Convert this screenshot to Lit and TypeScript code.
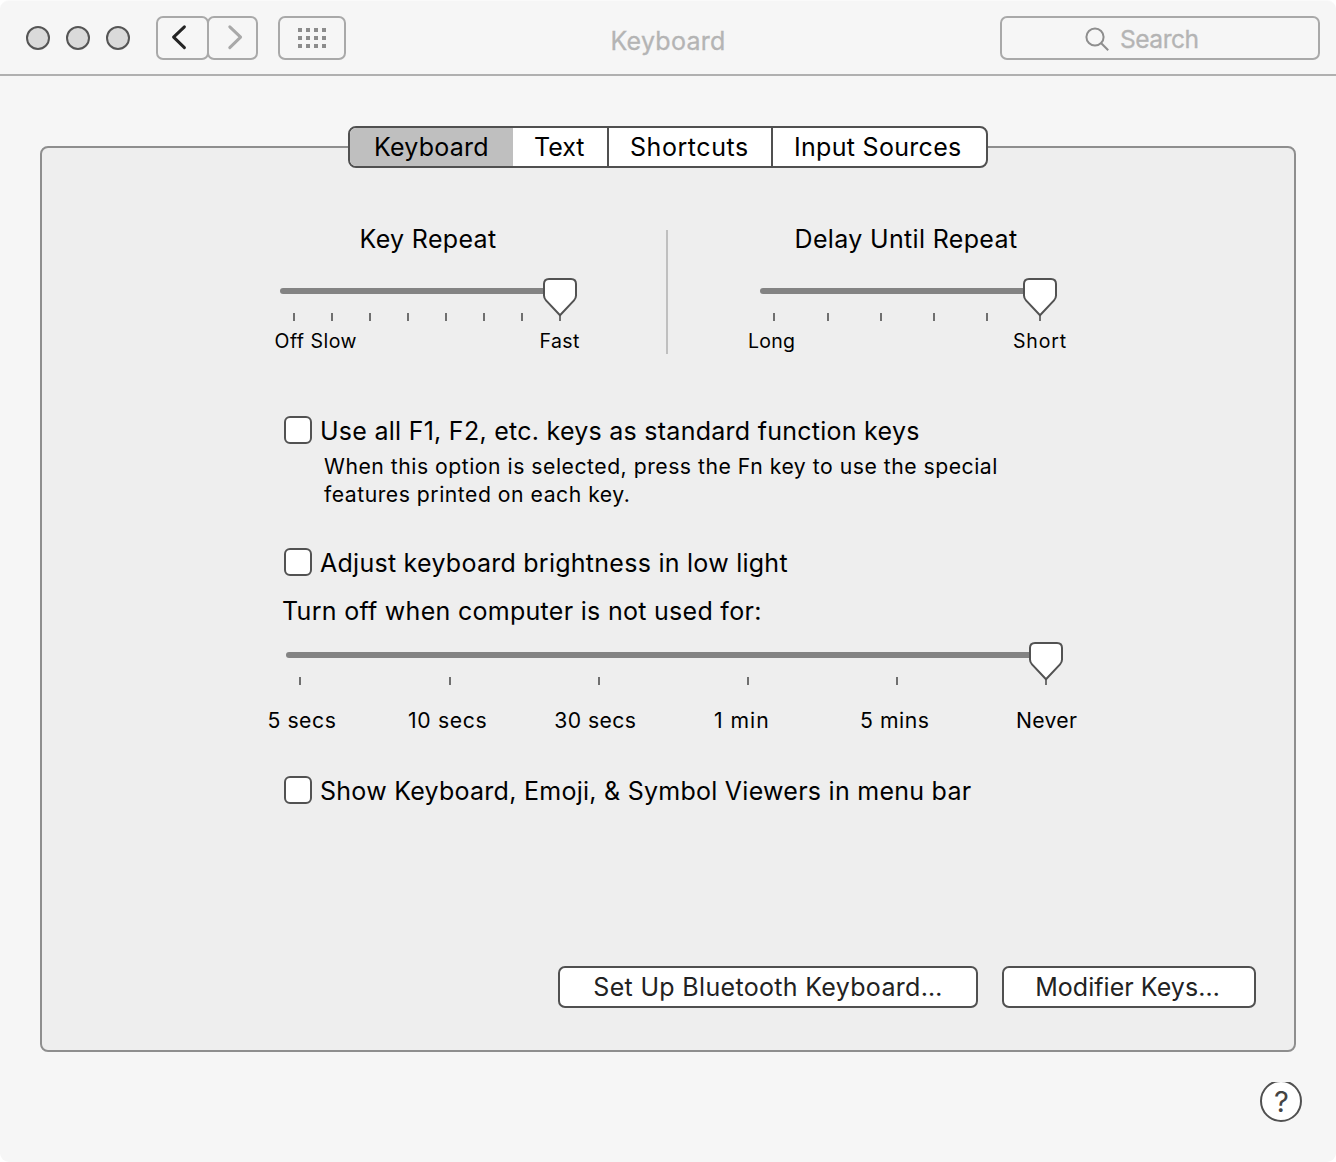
import { LitElement, html, svg, css } from "lit";
import { customElement, property } from "lit/decorators.js";

interface SliderLabel {
  text: string;
  x: number;
  width: number;
}

/** A tick-marked slider with its pointed knob resting on the last tick. */
@customElement("tick-slider")
class TickSlider extends LitElement {
  @property({ attribute: false }) ticks: number[] = [];
  @property({ attribute: false }) labels: SliderLabel[] = [];
  @property({ type: Number }) labelSize = 19.5;
  @property({ type: Number }) baseline = 70;
  @property({ type: Number }) width = 296;

  static styles = css`
    :host {
      display: block;
    }
    .slider {
      display: block;
      overflow: visible;
      font-family: Inter, "Liberation Sans", sans-serif;
    }
    .track {
      fill: #838383;
    }
    .tick {
      fill: #6f6f6f;
    }
    .knob {
      fill: #fff;
      stroke: #525252;
      stroke-width: 2;
      stroke-linejoin: round;
    }
    .label {
      fill: #000;
    }
  `;

  render() {
    const end = this.ticks[this.ticks.length - 1];
    return html`<svg class="slider" width=${this.width} height=${this.baseline + 6}>
      <rect class="track" x="0" y="10" width=${end} height="6" rx="3"></rect>
      ${this.ticks.map(
        (x) => svg`<rect class="tick" x=${x - 1} y="35" width="2" height="8"></rect>`
      )}
      <path
        class="knob"
        transform="translate(${end - 17} 0)"
        d="M6 1H28Q33 1 33 6V17.5Q33 20.3 31 22.4L17 37.3L3 22.4Q1 20.3 1 17.5V6Q1 1 6 1Z"
      ></path>
      ${this.labels.map(
        (l) => svg`<text class="label" x=${l.x} y=${this.baseline}
          font-size=${this.labelSize} textLength=${l.width}>${l.text}</text>`
      )}
    </svg>`;
  }
}

@customElement("check-row")
class CheckRow extends LitElement {
  static styles = css`
    :host {
      display: flex;
      gap: 8px;
      height: 30px;
      line-height: 30px;
      white-space: nowrap;
    }
    .box {
      box-sizing: border-box;
      width: 28px;
      height: 28px;
      flex: none;
      border: 2px solid #525252;
      border-radius: 6px;
      background: #fff;
    }
  `;

  render() {
    return html`<span class="box"></span><span><slot></slot></span>`;
  }
}

@customElement("app-root")
class AppRoot extends LitElement {
  static styles = css`
    :host {
      display: block;
      background: #fff;
      font-family: Inter, "Liberation Sans", sans-serif;
      font-size: 25px;
      color: #000;
    }
    .window {
      box-sizing: border-box;
      width: 1336px;
      height: 1162px;
      display: flex;
      flex-direction: column;
      background: #f6f6f6;
      border-top: 1px solid #fafafa;
      border-radius: 9px;
      overflow: hidden;
    }
    .toolbar {
      box-sizing: border-box;
      height: 75px;
      flex: none;
      display: grid;
      grid-template-columns: 1fr auto 1fr;
      align-items: start;
      padding: 15px 16px 0 26px;
      border-bottom: 2px solid #b0b0b0;
    }
    .left {
      display: flex;
    }
    .lights {
      display: flex;
      gap: 16px;
      padding-top: 10px;
      margin-right: 26px;
    }
    .light {
      box-sizing: border-box;
      width: 24px;
      height: 24px;
      border: 2px solid #555;
      border-radius: 50%;
      background: #dadada;
    }
    .tool {
      box-sizing: border-box;
      height: 44px;
      border: 2px solid #a9a9a9;
      border-radius: 7px;
    }
    .tool svg,
    .search svg,
    .help {
      display: block;
    }
    .back {
      width: 53px;
    }
    .forward {
      width: 51px;
      margin-left: -2px;
    }
    .grid {
      width: 68px;
      margin-left: 20px;
    }
    .chevron {
      fill: none;
      stroke: #242424;
      stroke-width: 3;
      stroke-linecap: round;
      stroke-linejoin: round;
    }
    .chevron.dim {
      stroke: #a9a9a9;
    }
    .dots {
      fill: #8c8c8c;
    }
    .title {
      margin: 10px 10px 0 0;
      line-height: 30px;
      letter-spacing: 0.25px;
      color: #b4b4b4;
      -webkit-text-stroke: 0.3px #b4b4b4;
    }
    .search {
      box-sizing: border-box;
      justify-self: end;
      display: flex;
      gap: 8px;
      width: 320px;
      height: 44px;
      padding-left: 82px;
      border: 2px solid #a9a9a9;
      border-radius: 7px;
      color: #b4b4b4;
      -webkit-text-stroke: 0.3px #b4b4b4;
      font-size: 24.6px;
      line-height: 43px;
      letter-spacing: -0.5px;
    }
    .glass {
      fill: none;
      stroke: #8e8e8e;
      stroke-width: 2;
    }
    .tabs {
      position: relative;
      z-index: 1;
      flex: none;
      align-self: center;
      box-sizing: border-box;
      display: flex;
      width: 640px;
      height: 42px;
      margin: 50px 0 -22px;
      border: 2px solid #505050;
      border-radius: 8px;
      background: #fff;
      overflow: hidden;
      line-height: 38px;
      white-space: nowrap;
    }
    .tab {
      box-sizing: border-box;
    }
    .t-keyboard {
      width: 163px;
      padding-left: 24px;
      background: #bfbfbf;
      letter-spacing: 0.22px;
    }
    .t-text {
      width: 94px;
      padding-left: 21px;
      letter-spacing: 0px;
    }
    .t-shortcuts {
      width: 164px;
      padding-left: 21px;
      border-left: 2px solid #505050;
      letter-spacing: 0.56px;
    }
    .t-sources {
      flex: 1;
      padding-left: 21px;
      border-left: 2px solid #505050;
      letter-spacing: 0.3px;
    }
    .panel {
      box-sizing: border-box;
      flex: none;
      display: flex;
      flex-direction: column;
      height: 906px;
      margin: 0 40px;
      padding: 76px 38px 42px 238px;
      border: 2px solid #8e8e8e;
      border-radius: 8px;
      background: #eee;
    }
    .repeat {
      display: flex;
      height: 130px;
    }
    .group {
      width: 296px;
    }
    .heading {
      margin-bottom: 24px;
      line-height: 30px;
      text-align: center;
      letter-spacing: 0.34px;
    }
    .delay {
      padding-right: 4px;
    }
    .divider {
      width: 2px;
      height: 124px;
      margin: 6px 92px 0 90px;
      background: #bfbfbf;
    }
    .options {
      margin: 62px 0 0 4px;
      letter-spacing: 0.26px;
    }
    .note {
      margin: 6px 0 40px 40px;
      font-size: 21.2px;
      line-height: 28px;
      letter-spacing: 0.51px;
    }
    .idle {
      margin: 18px 0 16px -2px;
      line-height: 30px;
      letter-spacing: 0.29px;
    }
    .idle-slider {
      margin: 0 0 42px 2px;
    }
    .buttons {
      display: flex;
      justify-content: flex-end;
      gap: 24px;
      margin-top: auto;
    }
    .button {
      box-sizing: border-box;
      height: 42px;
      border: 2px solid #505050;
      border-radius: 7px;
      background: #fff;
      color: #222;
      line-height: 38px;
      text-align: center;
    }
    .bluetooth {
      width: 420px;
      letter-spacing: 0.32px;
    }
    .modifier {
      width: 254px;
      padding-right: 3px;
      letter-spacing: 0.05px;
    }
    .help {
      align-self: flex-end;
      margin: 30px 34px 0 0;
      font-size: 29px;
      text-anchor: middle;
    }
    .help-ring {
      fill: #fff;
      stroke: #505050;
      stroke-width: 2;
    }
    .help-mark {
      fill: #444;
    }
  `;

  private repeatTicks = [14, 52, 90, 128, 166, 204, 242, 280];
  private repeatLabels: SliderLabel[] = [
    { text: "Off Slow", x: -5.5, width: 82 },
    { text: "Fast", x: 259.4, width: 40 },
  ];
  private delayTicks = [14, 68, 121, 174, 227, 280];
  private delayLabels: SliderLabel[] = [
    { text: "Long", x: -12, width: 47 },
    { text: "Short", x: 252.9, width: 53.2 },
  ];
  private idleTicks = [14, 164, 313, 462, 611, 760];
  private idleLabels: SliderLabel[] = [
    { text: "5 secs", x: -18.5, width: 68.6 },
    { text: "10 secs", x: 122, width: 79 },
    { text: "30 secs", x: 268.3, width: 82 },
    { text: "1 min", x: 428, width: 55 },
    { text: "5 mins", x: 574, width: 69.3 },
    { text: "Never", x: 730, width: 61.2 },
  ];

  render() {
    return html`
      <div class="window">
        <header class="toolbar">
          <div class="left">
            <div class="lights">
              <span class="light"></span><span class="light"></span><span class="light"></span>
            </div>
            <div class="tool back">
              <svg width="49" height="40">
                <path class="chevron" d="M26.4 8.8L15.6 19.2L26.4 29.6"></path>
              </svg>
            </div>
            <div class="tool forward">
              <svg width="47" height="40">
                <path class="chevron dim" d="M20.8 8.8L31.6 19.2L20.8 29.6"></path>
              </svg>
            </div>
            <div class="tool grid">
              <svg class="dots" width="64" height="40">
                ${[10, 18, 26].map((y) =>
                  [18, 26, 34, 42].map(
                    (x) => svg`<rect x=${x} y=${y} width="4" height="4"></rect>`
                  )
                )}
              </svg>
            </div>
          </div>
          <div class="title">Keyboard</div>
          <div class="search">
            <svg width="28" height="40">
              <circle class="glass" cx="11" cy="19" r="8.6"></circle>
              <path class="glass" d="M17 25L24.2 32.2"></path>
            </svg>
            <span>Search</span>
          </div>
        </header>

        <nav class="tabs">
          <div class="tab t-keyboard">Keyboard</div>
          <div class="tab t-text">Text</div>
          <div class="tab t-shortcuts">Shortcuts</div>
          <div class="tab t-sources">Input Sources</div>
        </nav>

        <main class="panel">
          <section class="repeat">
            <div class="group">
              <div class="heading">Key Repeat</div>
              <tick-slider .ticks=${this.repeatTicks} .labels=${this.repeatLabels}></tick-slider>
            </div>
            <div class="divider"></div>
            <div class="group">
              <div class="heading delay">Delay Until Repeat</div>
              <tick-slider .ticks=${this.delayTicks} .labels=${this.delayLabels}></tick-slider>
            </div>
          </section>

          <section class="options">
            <check-row>Use all F1, F2, etc. keys as standard function keys</check-row>
            <div class="note">
              When this option is selected, press the Fn key to use the special<br />features
              printed on each key.
            </div>
            <check-row>Adjust keyboard brightness in low light</check-row>
            <div class="idle">Turn off when computer is not used for:</div>
            <tick-slider
              class="idle-slider"
              .width=${778}
              .labelSize=${21.2}
              .baseline=${86}
              .ticks=${this.idleTicks}
              .labels=${this.idleLabels}
            ></tick-slider>
            <check-row>Show Keyboard, Emoji, &amp; Symbol Viewers in menu bar</check-row>
          </section>

          <div class="buttons">
            <div class="button bluetooth">Set Up Bluetooth Keyboard…</div>
            <div class="button modifier">Modifier Keys…</div>
          </div>
        </main>

        <svg class="help" width="42" height="42">
          <clipPath id="help-clip"><rect x="0" y="0" width="42" height="42"></rect></clipPath>
          <g clip-path="url(#help-clip)">
            <circle class="help-ring" cx="21" cy="19" r="20"></circle>
          </g>
          <text class="help-mark" x="21.4" y="30">?</text>
        </svg>
      </div>
    `;
  }
}
